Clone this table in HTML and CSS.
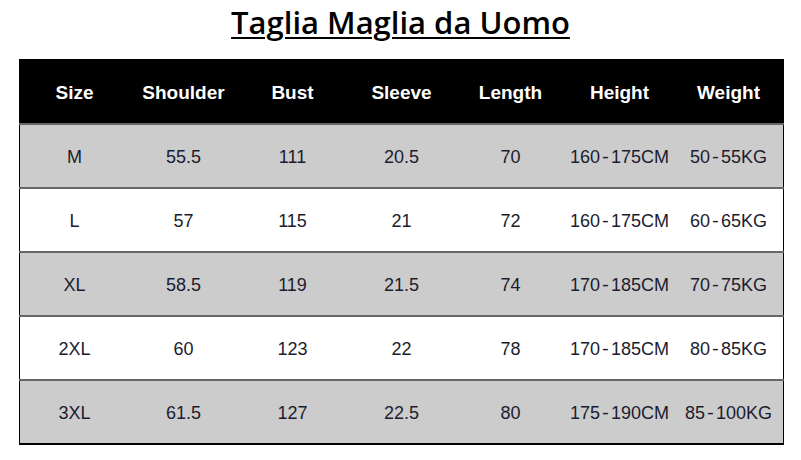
FILE: index.html
```html
<!DOCTYPE html>
<html>
<head>
<meta charset="utf-8">
<link rel="stylesheet" href="styles.css">
</head>
<body>
<h1 class="title">Taglia Maglia da Uomo</h1>
<table class="sizes">
<thead>
<tr><th>Size</th><th>Shoulder</th><th>Bust</th><th>Sleeve</th><th>Length</th><th>Height</th><th>Weight</th></tr>
</thead>
<tbody>
<tr class="grey"><td>M</td><td>55.5</td><td>111</td><td>20.5</td><td>70</td><td>160<span class="dash">-</span>175CM</td><td>50<span class="dash">-</span>55KG</td></tr>
<tr><td>L</td><td>57</td><td>115</td><td>21</td><td>72</td><td>160<span class="dash">-</span>175CM</td><td>60<span class="dash">-</span>65KG</td></tr>
<tr class="grey"><td>XL</td><td>58.5</td><td>119</td><td>21.5</td><td>74</td><td>170<span class="dash">-</span>185CM</td><td>70<span class="dash">-</span>75KG</td></tr>
<tr><td>2XL</td><td>60</td><td>123</td><td>22</td><td>78</td><td>170<span class="dash">-</span>185CM</td><td>80<span class="dash">-</span>85KG</td></tr>
<tr class="grey"><td>3XL</td><td>61.5</td><td>127</td><td>22.5</td><td>80</td><td>175<span class="dash">-</span>190CM</td><td>85<span class="dash">-</span>100KG</td></tr>
</tbody>
</table>
</body>
</html>
```
FILE: styles.css
```css
html, body { margin: 0; padding: 0; background: #fff; }
body { font-family: "Liberation Sans", Arial, sans-serif; }
.title {
  margin: 0;
  height: 59px;
  box-sizing: border-box;
  padding-top: 3px;
  text-align: center;
  font-family: "Open Sans", sans-serif;
  font-weight: 600;
  font-size: 31px;
  line-height: 38px;
  color: #000;
  text-decoration: underline;
  text-decoration-thickness: 2px;
  text-underline-offset: 3px;
}
.sizes {
  margin-left: 19px;
  width: 763px;
  border-collapse: collapse;
  table-layout: fixed;
  border-left: 1px solid #000;
  border-right: 1px solid #000;
  border-bottom: 2px solid #000;
}
.sizes th, .sizes td {
  width: 109px;
  padding: 3px 0 0 0;
  text-align: center;
  white-space: nowrap;
}
.sizes th {
  height: 61px;
  background: #000;
  color: #fff;
  font-size: 19px;
  font-weight: bold;
}
.sizes td {
  height: 59px;
  font-size: 18px;
  color: #1c1c30;
  border-top: 2px solid #666;
}
.sizes tr.grey td { background: #cccccc; }
.dash { font-family: "Liberation Mono", monospace; }
```
